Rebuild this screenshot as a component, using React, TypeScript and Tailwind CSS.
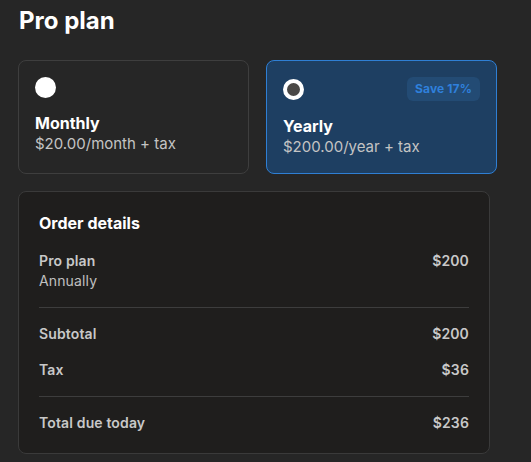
import { useState } from "react";

type Plan = "monthly" | "yearly";

const font = { fontFamily: "Inter, 'Noto Sans', sans-serif" };

function Radio({ checked }: { checked: boolean }) {
  return checked ? (
    <span className="block size-[21px] rounded-full border-[4px] border-white bg-[#4a4846]" />
  ) : (
    <span className="block size-[21px] rounded-full bg-white" />
  );
}

function PlanCard({
  selected,
  title,
  price,
  badge,
  onClick,
}: {
  selected: boolean;
  title: string;
  price: string;
  badge?: string;
  onClick: () => void;
}) {
  return (
    <button
      onClick={onClick}
      className={
        selected
          ? "flex flex-col rounded-lg border border-[#2f7fd4] bg-[#1e3f62] px-4 pt-4 pb-4 text-left"
          : "flex flex-col rounded-lg border border-[#3e3e3e] bg-[#262626] px-4 pt-4 pb-4 text-left"
      }
    >
      <div className="flex items-center justify-between">
        <Radio checked={selected} />
        {badge && (
          <span className="rounded-md bg-[#234b74] px-2 py-[3px] text-[12px] font-bold leading-[18px] tracking-[0.01em] text-[#2f80dc]">
            {badge}
          </span>
        )}
      </div>
      <div className="mt-[15px] text-[16px] font-bold leading-5 text-white">{title}</div>
      <div className="mt-px text-[15px] leading-5 text-[#c4c4c4]">{price}</div>
    </button>
  );
}

function Row({ label, value, sub }: { label: string; value: string; sub?: string }) {
  return (
    <div className="flex justify-between text-[14px] leading-5 tracking-[0.01em]">
      <div>
        <div className="font-semibold text-[#c8c8c8]">{label}</div>
        {sub && <div className="text-[#c0c0c0]">{sub}</div>}
      </div>
      <div className="font-semibold text-[#c8c8c8]">{value}</div>
    </div>
  );
}

export default function App() {
  const [plan, setPlan] = useState<Plan>("yearly");

  return (
    <div className="min-h-[462px] bg-[#262626] px-[18px] pt-[6px]" style={font}>
      <h1 className="pl-px text-[24px] font-bold leading-[30px] text-white">Pro plan</h1>

      <div className="mt-[24px] grid w-[479px] grid-cols-2 gap-[17px]">
        <PlanCard
          selected={plan === "monthly"}
          title="Monthly"
          price="$20.00/month + tax"
          onClick={() => setPlan("monthly")}
        />
        <PlanCard
          selected={plan === "yearly"}
          title="Yearly"
          price="$200.00/year + tax"
          badge="Save 17%"
          onClick={() => setPlan("yearly")}
        />
      </div>

      <div className="mt-[17px] w-[472px] rounded-lg border border-[#3a3a3a] bg-[#1f1e1d] px-5 pt-[19px] pb-5">
        <h2 className="text-[16px] font-bold leading-6 text-white">Order details</h2>
        <div className="mt-4">
          <Row label="Pro plan" sub="Annually" value="$200" />
        </div>
        <div className="my-4 h-px bg-[#3d3d3d]" />
        <div className="flex flex-col gap-4">
          <Row label="Subtotal" value="$200" />
          <Row label="Tax" value="$36" />
        </div>
        <div className="my-4 h-px bg-[#3d3d3d]" />
        <Row label="Total due today" value="$236" />
      </div>
    </div>
  );
}
